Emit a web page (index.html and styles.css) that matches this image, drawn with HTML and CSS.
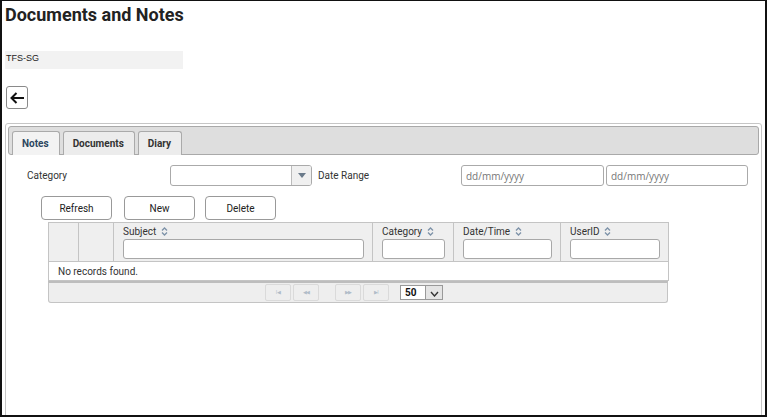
FILE: index.html
```html
<!DOCTYPE html>
<html lang="en">
<head>
    <meta charset="UTF-8">
    <meta name="viewport" content="width=device-width, initial-scale=1.0">
    <title>Documents and Notes</title>
    <link rel="stylesheet" href="styles.css">
</head>
<body>
    <h1 class="page-title">Documents and Notes</h1>
    <div class="entity-bar">TFS-SG</div>
    <button class="back-btn" type="button">
        <svg width="16" height="14" viewBox="0 0 16 14">
            <path d="M15 7H2.5M7.5 2L2.5 7l5 5" fill="none" stroke="#111" stroke-width="2"/>
        </svg>
    </button>

    <div class="panel">
        <ul class="tabs">
            <li class="tab active">Notes</li>
            <li class="tab">Documents</li>
            <li class="tab">Diary</li>
        </ul>

        <div class="filter-row">
            <label class="filter-label">Category</label>
            <div class="select">
                <span class="select-value"></span>
                <span class="select-arrow">
                    <svg width="8" height="5" viewBox="0 0 8 5"><path d="M0 0h8L4 5z" fill="#6a7a8a"/></svg>
                </span>
            </div>
            <label class="filter-label range">Date Range</label>
            <input class="date-input" type="text" placeholder="dd/mm/yyyy">
            <input class="date-input second" type="text" placeholder="dd/mm/yyyy">
        </div>

        <div class="action-row">
            <button class="btn" type="button">Refresh</button>
            <button class="btn" type="button">New</button>
            <button class="btn" type="button">Delete</button>
        </div>

        <div class="grid">
            <table>
                <thead>
                    <tr>
                        <th class="c-sel"></th>
                        <th class="c-act"></th>
                        <th class="c-subject">Subject <svg class="sort" width="7" height="9" viewBox="0 0 7 9"><path d="M1 3.5L3.5 1 6 3.5M1 5.5L3.5 8 6 5.5" fill="none" stroke="#7d92a8" stroke-width="1.3"/></svg><input type="text"></th>
                        <th class="c-category">Category <svg class="sort" width="7" height="9" viewBox="0 0 7 9"><path d="M1 3.5L3.5 1 6 3.5M1 5.5L3.5 8 6 5.5" fill="none" stroke="#7d92a8" stroke-width="1.3"/></svg><input type="text"></th>
                        <th class="c-date">Date/Time <svg class="sort" width="7" height="9" viewBox="0 0 7 9"><path d="M1 3.5L3.5 1 6 3.5M1 5.5L3.5 8 6 5.5" fill="none" stroke="#7d92a8" stroke-width="1.3"/></svg><input type="text"></th>
                        <th class="c-user">UserID <svg class="sort" width="7" height="9" viewBox="0 0 7 9"><path d="M1 3.5L3.5 1 6 3.5M1 5.5L3.5 8 6 5.5" fill="none" stroke="#7d92a8" stroke-width="1.3"/></svg><input type="text"></th>
                    </tr>
                </thead>
                <tbody>
                    <tr>
                        <td class="empty" colspan="6">No records found.</td>
                    </tr>
                </tbody>
            </table>
            <div class="pager">
                <span class="pg-btn">I&#9664;</span>
                <span class="pg-btn">&#9664;&#9664;</span>
                <span class="pg-btn gap">&#9654;&#9654;</span>
                <span class="pg-btn">&#9654;I</span>
                <div class="rows-select">
                    <span class="rows-value">50</span>
                    <span class="rows-arrow">
                        <svg width="9" height="6" viewBox="0 0 9 6"><path d="M1 1l3.5 4L8 1" fill="none" stroke="#333" stroke-width="1.4"/></svg>
                    </span>
                </div>
            </div>
        </div>
    </div>
</body>
</html>
```

FILE: styles.css
```css
*, *::before, *::after {
    box-sizing: border-box;
}
html, body {
    margin: 0;
    height: 100%;
}
body {
    width: 767px;
    height: 417px;
    overflow: hidden;
    border: 2px solid #111;
    border-top-width: 1px;
    padding: 0 3px;
    font-family: Roboto, "Liberation Sans", sans-serif;
    font-size: 10px;
    color: #333;
    background: #fff;
}
.page-title {
    margin: 3px 0 0;
    font-size: 18px;
    line-height: 22px;
    font-weight: bold;
    color: #222;
}
.entity-bar {
    width: 178px;
    height: 18px;
    margin-top: 25px;
    padding: 2px 1px;
    background: #f2f2f2;
    font-family: "Liberation Sans", Arial, sans-serif;
    font-size: 9px;
    color: #222;
}
.back-btn {
    display: flex;
    align-items: center;
    justify-content: center;
    width: 22px;
    height: 23px;
    margin: 17px 0 0 1px;
    padding: 0;
    border: 1px solid #8a8a8a;
    border-radius: 3px;
    background: #fff;
}

/*--------- PANEL -------------*/
.panel {
    margin-top: 14px;
    height: 300px;
    border: 1px solid #c6c6c6;
    border-radius: 3px;
    padding: 2px;
}
.tabs {
    display: flex;
    gap: 3px;
    margin: 0;
    padding: 4px 3px 0;
    list-style: none;
    height: 29px;
    background: #dedede;
    border: 1px solid #a9a9a9;
    border-radius: 3px;
}
.tab {
    height: 24px;
    padding: 0 10px 0 9px;
    line-height: 23px;
    font-weight: bold;
    font-size: 10px;
    color: #333;
    background: #ececec;
    border: 1px solid #aaa;
    border-bottom: none;
    border-radius: 3px 3px 0 0;
}
.tab.active {
    color: #2d4660;
    background: #f3f3f3;
}

.filter-row {
    display: flex;
    align-items: center;
    margin-top: 10px;
    padding-left: 19px;
    height: 21px;
}
.filter-label {
    width: 143px;
    font-size: 10px;
    color: #333;
}
.filter-label.range {
    margin-left: 6px;
}
.select {
    display: flex;
    width: 142px;
    height: 21px;
    border: 1px solid #aaa;
    border-radius: 3px;
    overflow: hidden;
}
.select-value {
    flex: 1;
}
.select-arrow {
    display: flex;
    align-items: center;
    justify-content: center;
    width: 20px;
    background: #f0f0f0;
    border-left: 1px solid #bbb;
}
.date-input {
    width: 143px;
    height: 21px;
    padding: 0 4px;
    border: 1px solid #aaa;
    border-radius: 3px;
    font-family: "Open Sans", Roboto, sans-serif;
    font-size: 10px;
    outline: none;
}
.date-input::placeholder {
    color: #777;
}
.date-input.second {
    margin-left: 2px;
    width: 142px;
}

.action-row {
    display: flex;
    gap: 12px;
    margin: 10px 0 0 33px;
}
.btn {
    width: 71px;
    height: 24px;
    padding: 0;
    border: 1px solid #999;
    border-radius: 4px;
    background: #fff;
    font-family: Roboto, sans-serif;
    font-size: 10px;
    color: #222;
}
.btn + .btn + .btn {
    margin-left: -2px;
}

/*--------- GRID -------------*/
.grid {
    width: 620px;
    margin: 2px 0 0 40px;
}
.grid table {
    width: 620px;
    border-collapse: collapse;
    table-layout: fixed;
}
.grid th {
    height: 39px;
    padding: 3px 8px 2px 9px;
    background: #efefef;
    border: 1px solid #c4c4c4;
    text-align: left;
    vertical-align: top;
    font-weight: normal;
    font-size: 10px;
    line-height: 12px;
    color: #333;
}
.grid th input {
    display: block;
    width: 100%;
    height: 20px;
    margin-top: 1px;
    border: 1px solid #a8a8a8;
    border-radius: 3px;
    background: #fff;
}
.grid .sort {
    margin-left: 2px;
    vertical-align: -1px;
}
.c-sel { width: 30px; }
.c-act { width: 35px; }
.c-subject { width: 259px; }
.c-category { width: 81px; }
.c-date { width: 107px; }
.c-user { width: 108px; }
.grid td.empty {
    height: 19px;
    padding: 0 9px;
    border: 1px solid #c4c4c4;
    font-size: 10px;
    color: #333;
}
.pager {
    display: flex;
    align-items: center;
    justify-content: flex-start;
    height: 22px;
    padding-left: 216px;
    background: #eeeeee;
    border: 1px solid #c4c4c4;
    border-top: 2px solid #bdbdbd;
    border-radius: 0 0 3px 3px;
}
.pg-btn {
    width: 26px;
    height: 17px;
    margin-right: 2px;
    border: 1px solid #dadada;
    border-radius: 2px;
    text-align: center;
    line-height: 15px;
    font-size: 5px;
    letter-spacing: -0.5px;
    color: #b0bcc8;
}
.pg-btn.gap {
    margin-left: 14px;
}
.rows-select {
    display: flex;
    margin-left: 9px;
    height: 15px;
    width: 43px;
    border: 1px solid #999;
    background: #fff;
}
.rows-value {
    flex: 1;
    padding-left: 4px;
    font-weight: bold;
    font-size: 10px;
    line-height: 13px;
    color: #111;
}
.rows-arrow {
    display: flex;
    align-items: flex-end;
    justify-content: center;
    width: 17px;
    padding-bottom: 2px;
    background: #e4e4e4;
    border-left: 1px solid #999;
}
```
